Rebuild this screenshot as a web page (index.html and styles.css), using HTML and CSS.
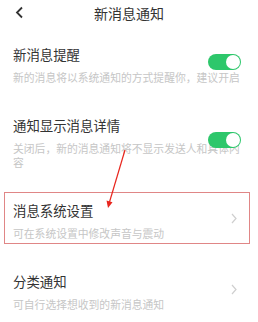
FILE: index.html
```html
<!DOCTYPE html>
<html lang="zh-CN">
  <head>
    <meta charset="UTF-8" />
    <meta name="viewport" content="width=device-width, initial-scale=1.0" />
    <title>新消息通知</title>
    <link rel="stylesheet" href="styles.css">
  </head>
  <body>
    <header class="topbar">
      <svg class="back" width="9" height="13" viewBox="0 0 9 13">
        <path d="M7 1.5 L2 6.5 L7 11.5" fill="none" stroke="#333" stroke-width="1.8" />
      </svg>
      <h1>新消息通知</h1>
    </header>

    <div class="list">
      <div class="row">
        <div class="row-title">新消息提醒</div>
        <div class="row-desc">新的消息将以系统通知的方式提醒你，建议开启</div>
        <span class="switch on"><span class="knob"></span></span>
      </div>

      <div class="row">
        <div class="row-title">通知显示消息详情</div>
        <div class="row-desc">关闭后，新的消息通知将不显示发送人和具体内容</div>
        <span class="switch on"><span class="knob"></span></span>
      </div>

      <div class="row">
        <div class="row-title">消息系统设置</div>
        <div class="row-desc">可在系统设置中修改声音与震动</div>
        <svg class="chevron" width="6" height="11" viewBox="0 0 6 11">
          <path d="M1 1 L5 5.5 L1 10" fill="none" stroke="#cfcfcf" stroke-width="1.2" />
        </svg>
      </div>

      <div class="row">
        <div class="row-title">分类通知</div>
        <div class="row-desc">可自行选择想收到的新消息通知</div>
        <svg class="chevron" width="6" height="11" viewBox="0 0 6 11">
          <path d="M1 1 L5 5.5 L1 10" fill="none" stroke="#cfcfcf" stroke-width="1.2" />
        </svg>
      </div>
    </div>

    <!-- annotation drawn over the screenshot -->
    <div class="mark-box"></div>
    <svg class="mark-arrow" width="258" height="322" viewBox="0 0 258 322">
      <line x1="125" y1="150" x2="109.5" y2="202" stroke="#e8261e" stroke-width="1.2" />
      <path d="M106.5 200.5 L108 208 L112.5 202.2 Z" fill="#e8261e" />
    </svg>
  </body>
</html>
```

FILE: styles.css
```css
* {
  margin: 0;
  padding: 0;
  box-sizing: border-box;
}

body {
  width: 258px;
  height: 322px;
  overflow: hidden;
  background: #fff;
  color: #333;
  font-family: "Noto Sans CJK SC", "Noto Sans", sans-serif;
  position: relative;
}

/* Top bar */
.topbar {
  position: relative;
  padding: 4px 0 7px;
  text-align: center;
}

.topbar h1 {
  font-size: 14px;
  font-weight: normal;
  line-height: 18px;
  color: #333;
}

.back {
  position: absolute;
  left: 15px;
  top: 6px;
}

/* Setting rows */
.row {
  position: relative;
  padding: 16px 13px;
}

.row-title {
  font-size: 13.4px;
  line-height: 18px;
  color: #333;
}

.row-desc {
  margin-top: 7px;
  font-size: 10.8px;
  line-height: 14px;
  color: #c6c6c6;
}

.switch {
  position: absolute;
  right: 17px;
  top: calc(50% - 11px);
  width: 33px;
  height: 16px;
  border-radius: 8px;
  background: #2dc76b;
}

.switch .knob {
  position: absolute;
  right: 1px;
  top: 1px;
  width: 14px;
  height: 14px;
  border-radius: 50%;
  background: #fff;
}

.chevron {
  position: absolute;
  right: 21px;
  top: calc(50% - 8px);
}

/* Red annotation */
.mark-box {
  position: absolute;
  left: 4px;
  top: 192px;
  width: 246px;
  height: 52px;
  border: 1.5px solid #e08686;
}

.mark-arrow {
  position: absolute;
  left: 0;
  top: 0;
}
```
